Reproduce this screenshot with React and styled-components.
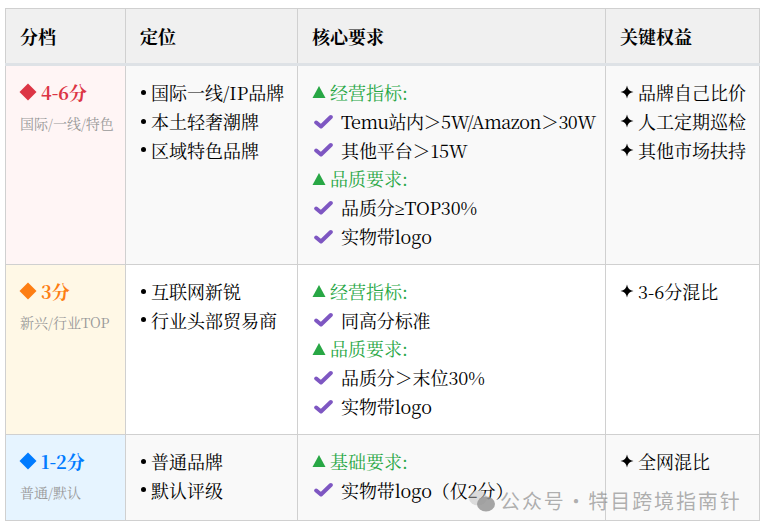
import styled, { createGlobalStyle } from "styled-components";

const GlobalStyle = createGlobalStyle`
  html, body {
    margin: 0;
    padding: 0;
    background: #fff;
  }
  body {
    font-family: "Noto Serif CJK SC", "DejaVu Serif", "Noto Sans CJK SC", serif;
    color: #000;
  }
`;

const Page = styled.div`
  position: relative;
  width: 765px;
  height: 531px;
  overflow: hidden;
  padding: 8px 5px 0;
  box-sizing: border-box;
`;

const Table = styled.table`
  width: 754px;
  border-collapse: collapse;
  table-layout: fixed;
  font-size: 18px;
  line-height: 28.8px;
`;

const Th = styled.th`
  height: 54px;
  padding: 0 14px;
  text-align: left;
  font-weight: 700;
  background: #f0f0f0;
  border: 1px solid #d0d0d0;
  border-bottom: 3px solid #dee2e6;
`;

const Td = styled.td`
  padding: 12px 14px 13px;
  vertical-align: top;
  border: 1px solid #d0d0d0;
  background: ${(p) => p.$bg || "transparent"};
`;

const Tier = styled.div`
  display: flex;
  align-items: center;
  gap: 4px;
  margin-left: -1px;
  font-weight: 700;
  color: ${(p) => p.$color};
  white-space: nowrap;

  svg {
    flex-shrink: 0;
  }
`;

const TierNote = styled.div`
  margin-top: 2px;
  font-size: 14px;
  line-height: 29px;
  color: #999;
  white-space: nowrap;
`;

const Bullet = styled.div`
  display: flex;
  align-items: center;
  gap: 5px;
  padding-left: 1px;
  white-space: nowrap;

  &::before {
    content: "";
    flex-shrink: 0;
    width: 5px;
    height: 5px;
    border-radius: 50%;
    background: #000;
  }
`;

const Heading = styled.div`
  display: flex;
  align-items: center;
  gap: 4px;
  color: #28a745;
  white-space: nowrap;

  svg {
    flex-shrink: 0;
  }
`;

const CheckRow = styled.div`
  display: flex;
  align-items: center;
  gap: 8px;
  padding-left: 2px;
  white-space: pre;
  letter-spacing: ${(p) => (p.$tight ? "-0.5px" : "-0.1px")};

  svg {
    flex-shrink: 0;
  }
`;

const MathSign = styled.span`
  font-family: "Liberation Serif", serif;
  line-height: 0;
`;

const Perk = styled.div`
  display: flex;
  align-items: center;
  gap: 4px;
  white-space: nowrap;

  svg {
    flex-shrink: 0;
  }
`;

const Watermark = styled.div`
  position: absolute;
  left: 468px;
  top: 488px;
  display: flex;
  align-items: center;
  gap: 4px;
  font-family: "Noto Sans CJK SC", sans-serif;
  font-size: 20px;
  line-height: 26px;
  letter-spacing: 1.9px;
  word-spacing: -6px;
  color: rgba(110, 110, 110, 0.55);
  white-space: nowrap;
`;

const Diamond = ({ color }) => (
  <svg width="18" height="18" viewBox="0 0 18 18">
    <path d="M9 0.5 17.5 9 9 17.5 0.5 9Z" fill={color} />
  </svg>
);

const Triangle = () => (
  <svg width="14" height="12" viewBox="0 0 14 12">
    <path d="M7 0 13.5 12H0.5Z" fill="#28a745" />
  </svg>
);

const Check = () => (
  <svg width="19" height="15" viewBox="0 0 19 15">
    <path d="M2.2 8.5 7 12.5 16.8 3" fill="none" stroke="#7e57c2" strokeWidth="4" strokeLinecap="round" strokeLinejoin="round" />
  </svg>
);

const Star = () => (
  <svg width="14" height="14" viewBox="0 0 14 14">
    <path d="M7 0.5C7.6 4.2 9.6 6.4 13.5 7 9.6 7.6 7.6 9.8 7 13.5 6.4 9.8 4.4 7.6 0.5 7 4.4 6.4 6.4 4.2 7 0.5Z" fill="#000" />
  </svg>
);

const WeChat = () => (
  <svg width="28" height="24" viewBox="0 0 28 24">
    <ellipse cx="10" cy="9" rx="9" ry="7.5" fill="rgba(190,190,190,0.5)" />
    <ellipse cx="18" cy="15" rx="9" ry="7.5" fill="rgba(150,150,150,0.85)" />
  </svg>
);

// the ≥ is narrow in the picture, the serif CJK face only has a full-width one
const withMathSign = (text) => {
  const [before, after] = text.split("≥");
  if (after === undefined) return text;
  return (
    <span>
      {before}
      <MathSign>≥</MathSign>
      {after}
    </span>
  );
};

const rows = [
  {
    color: "#dc3545",
    bg: "#fff5f5",
    tier: "4-6分",
    note: "国际/一线/特色",
    rowBg: "#f9f9f9",
    brands: ["国际一线/IP品牌", "本土轻奢潮牌", "区域特色品牌"],
    reqs: [
      { title: "经营指标:", items: ["Temu站内＞5W/Amazon＞30W", "其他平台＞15W"] },
      { title: "品质要求:", items: ["品质分≥TOP30%", "实物带logo"] },
    ],
    perks: ["品牌自己比价", "人工定期巡检", "其他市场扶持"],
  },
  {
    color: "#fd7e14",
    bg: "#fff8e6",
    tier: "3分",
    note: "新兴/行业TOP",
    rowBg: "#fff",
    brands: ["互联网新锐", "行业头部贸易商"],
    reqs: [
      { title: "经营指标:", items: ["同高分标准"] },
      { title: "品质要求:", items: ["品质分＞末位30%", "实物带logo"] },
    ],
    perks: ["3-6分混比"],
  },
  {
    color: "#007bff",
    bg: "#e6f4ff",
    tier: "1-2分",
    note: "普通/默认",
    rowBg: "#f9f9f9",
    brands: ["普通品牌", "默认评级"],
    reqs: [{ title: "基础要求:", items: ["实物带logo（仅2分）"] }],
    perks: ["全网混比"],
  },
];

export default function App() {
  return (
    <Page>
      <GlobalStyle />
      <Table>
        <colgroup>
          <col width="120" />
          <col width="172" />
          <col width="308" />
          <col width="154" />
        </colgroup>
        <thead>
          <tr>
            <Th>分档</Th>
            <Th>定位</Th>
            <Th>核心要求</Th>
            <Th>关键权益</Th>
          </tr>
        </thead>
        <tbody>
          {rows.map((row) => (
            <tr key={row.tier}>
              <Td $bg={row.bg}>
                <Tier $color={row.color}>
                  <Diamond color={row.color} />
                  {row.tier}
                </Tier>
                <TierNote>{row.note}</TierNote>
              </Td>
              <Td $bg={row.rowBg}>
                {row.brands.map((b) => (
                  <Bullet key={b}>{b}</Bullet>
                ))}
              </Td>
              <Td $bg={row.rowBg}>
                {row.reqs.map((req) => (
                  <div key={req.title}>
                    <Heading>
                      <Triangle />
                      {req.title}
                    </Heading>
                    {req.items.map((item) => (
                      <CheckRow key={item} $tight={item.startsWith("Temu")}>
                        <Check />
                        {withMathSign(item)}
                      </CheckRow>
                    ))}
                  </div>
                ))}
              </Td>
              <Td $bg={row.rowBg}>
                {row.perks.map((p) => (
                  <Perk key={p}>
                    <Star />
                    {p}
                  </Perk>
                ))}
              </Td>
            </tr>
          ))}
        </tbody>
      </Table>
      <Watermark>
        <WeChat />
        公众号 · 特目跨境指南针
      </Watermark>
    </Page>
  );
}
